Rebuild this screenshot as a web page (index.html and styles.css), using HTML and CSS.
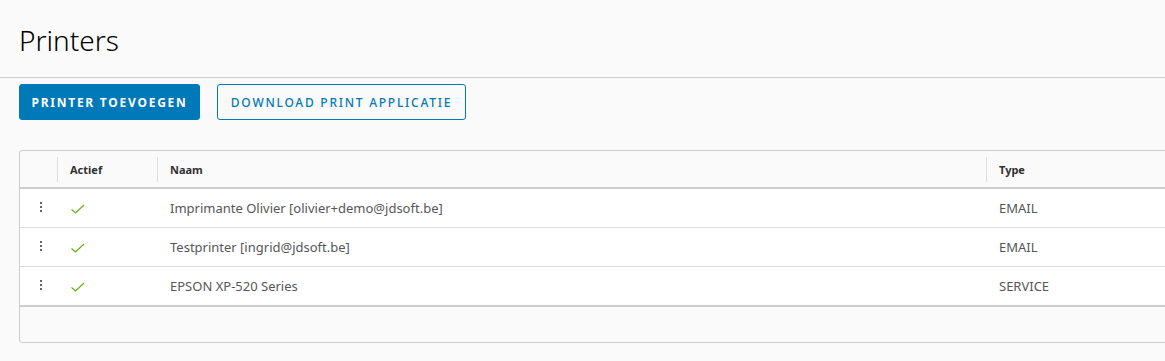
FILE: index.html
```html
<!DOCTYPE html>
<html lang="nl">
<head>
    <meta charset="UTF-8">
    <meta name="viewport" content="width=device-width, initial-scale=1.0">
    <title>Printers</title>
    <link rel="stylesheet" href="styles.css">
</head>
<body>
    <!-- Page header -->
    <div class="page-header">
        <h1>Printers</h1>
    </div>

    <!-- Actions -->
    <div class="toolbar">
        <button class="btn btn-primary">Printer toevoegen</button>
        <button class="btn btn-outline">Download print applicatie</button>
    </div>

    <!-- Printer grid -->
    <div class="datagrid">
        <table>
            <colgroup>
                <col class="col-action">
                <col class="col-active">
                <col class="col-name">
                <col class="col-type">
            </colgroup>
            <thead>
                <tr>
                    <th></th>
                    <th><span class="sep"></span>Actief</th>
                    <th><span class="sep"></span>Naam</th>
                    <th><span class="sep"></span>Type</th>
                </tr>
            </thead>
            <tbody>
                <tr>
                    <td class="dots"><span></span><span></span><span></span></td>
                    <td><svg class="check" width="16" height="12" viewBox="0 0 16 12"><path d="M1.5 6.5 L5.5 10 L14 2" fill="none" stroke="#60b515" stroke-width="1.2"/></svg></td>
                    <td>Imprimante Olivier [olivier+demo@jdsoft.be]</td>
                    <td>EMAIL</td>
                </tr>
                <tr>
                    <td class="dots"><span></span><span></span><span></span></td>
                    <td><svg class="check" width="16" height="12" viewBox="0 0 16 12"><path d="M1.5 6.5 L5.5 10 L14 2" fill="none" stroke="#60b515" stroke-width="1.2"/></svg></td>
                    <td>Testprinter [ingrid@jdsoft.be]</td>
                    <td>EMAIL</td>
                </tr>
                <tr>
                    <td class="dots"><span></span><span></span><span></span></td>
                    <td><svg class="check" width="16" height="12" viewBox="0 0 16 12"><path d="M1.5 6.5 L5.5 10 L14 2" fill="none" stroke="#60b515" stroke-width="1.2"/></svg></td>
                    <td>EPSON XP-520 Series</td>
                    <td>SERVICE</td>
                </tr>
            </tbody>
        </table>
        <div class="datagrid-footer"></div>
    </div>
</body>
</html>
```
FILE: styles.css
```css
/* General */
body {
    font-family: "Noto Sans", Arial, sans-serif;
    background-color: #fafafa;
    color: #565656;
    margin: 0;
    padding: 0;
    overflow: hidden;
}

/* Header */
.page-header {
    height: 77px;
    border-bottom: 1px solid #cccccc;
    padding: 0 19px;
    display: flex;
    align-items: center;
}

h1 {
    margin: 2px 0 0;
    font-size: 28px;
    font-weight: 300;
    color: #000000;
}

/* Buttons */
.toolbar {
    display: flex;
    gap: 17px;
    padding: 6px 19px 0;
}

.btn {
    height: 36px;
    padding: 0;
    border-radius: 3px;
    font-family: inherit;
    font-size: 12px;
    letter-spacing: 1.75px;
    text-transform: uppercase;
    cursor: pointer;
}

.btn-primary {
    width: 181px;
    background: #0079b8;
    border: 1px solid #0079b8;
    color: #ffffff;
    font-weight: 700;
}

.btn-outline {
    width: 249px;
    background: transparent;
    border: 1px solid #0079b8;
    color: #0079b8;
    font-weight: 500;
}

/* Datagrid */
.datagrid {
    margin: 30px 0 0 19px;
    width: 1180px;
    border: 1px solid #cccccc;
    border-radius: 3px;
    background: #fafafa;
    overflow: hidden;
}

table {
    width: 100%;
    border-collapse: collapse;
    table-layout: fixed;
}

.col-action { width: 37px; }
.col-active { width: 100px; }
.col-name { width: 829px; }

th {
    height: 36px;
    padding: 0 12px 0 13px;
    text-align: left;
    font-size: 11px;
    font-weight: 700;
    color: #313131;
    position: relative;
    border-bottom: 2px solid #cccccc;
}

th .sep {
    position: absolute;
    left: 0;
    top: 6px;
    height: 25px;
    border-left: 1px solid #dddddd;
}

td {
    height: 38px;
    padding: 0 12px 0 13px;
    background: #ffffff;
    font-size: 13px;
    border-bottom: 1px solid #dddddd;
}

tbody tr:last-child td {
    border-bottom: 2px solid #cccccc;
}

.check {
    display: block;
    margin-top: 2px;
}

.dots {
    padding: 0 0 0 20px;
}

.dots span {
    display: block;
    width: 2px;
    height: 2px;
    margin: 0 0 2px;
    background: #666666;
}

.datagrid-footer {
    height: 35px;
}
```
